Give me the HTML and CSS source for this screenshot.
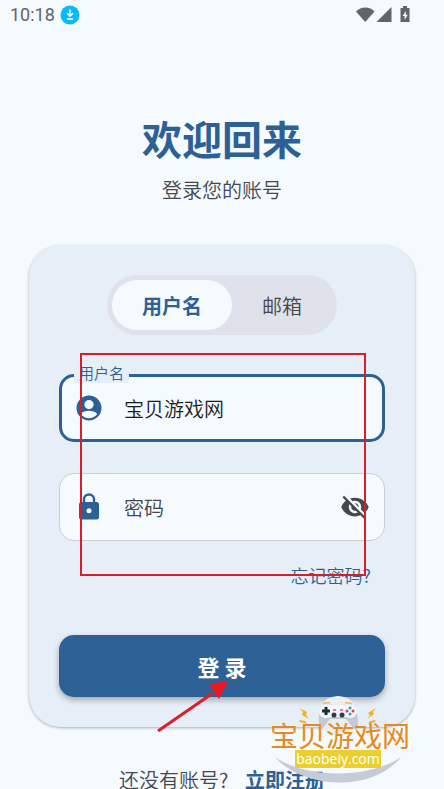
FILE: index.html
```html
<!DOCTYPE html>
<html lang="zh-CN">
<head>
    <meta charset="UTF-8">
    <meta name="viewport" content="width=device-width, initial-scale=1.0">
    <title>登录</title>
    <link rel="stylesheet" href="styles.css">
</head>
<body>
    <!-- 状态栏 -->
    <div class="status-bar">
        <span class="clock">10:18</span>
        <svg class="download-icon" width="20" height="20" viewBox="0 0 20 20">
            <circle cx="10" cy="10" r="9.5" fill="#08b9fb"/>
            <path d="M10 4.5v6.5M7 8.3l3 3 3-3M7 14h6" fill="none" stroke="#fff" stroke-width="1.5"/>
        </svg>
        <svg class="system-icons" width="56" height="18" viewBox="0 0 56 18">
            <path d="M0 5.5C5 0 14 0 18.500 5.500L9.200 16z"/>
            <path d="M20.500 16L35.500 1v15z"/>
            <path d="M44.500 2H47V0h4v2h2.500v14h-9z"/>
            <path d="M49.800 5l-3.200 5h2v4l3.200-5.200h-2z" fill="#f5faff"/>
        </svg>
    </div>

    <main class="login-page">
        <h1>欢迎回来</h1>
        <p class="subtitle">登录您的账号</p>

        <form class="login-card">
            <div class="tabs">
                <button type="button" class="tab active">用户名</button>
                <button type="button" class="tab">邮箱</button>
            </div>

            <div class="field focused">
                <label for="username">用户名</label>
                <svg class="field-icon" width="30" height="30" viewBox="0 0 24 24">
                    <path d="M12 2a10 10 0 1 0 0 20 10 10 0 0 0 0-20zm0 3.500a3.700 3.700 0 1 1 0 7.400 3.700 3.700 0 0 1 0-7.400zm0 14.700c-2.700 0-5.200-1.300-6.600-3.400 1.200-1.700 4.300-2.600 6.600-2.600s5.400.900 6.600 2.600c-1.400 2.100-3.900 3.400-6.600 3.400z"/>
                </svg>
                <input type="text" id="username" value="宝贝游戏网">
            </div>

            <div class="field">
                <svg class="field-icon" width="30" height="30" viewBox="0 0 24 24">
                    <path d="M18 8h-1V6A5 5 0 0 0 7 6v2H6a2 2 0 0 0-2 2v10a2 2 0 0 0 2 2h12a2 2 0 0 0 2-2V10a2 2 0 0 0-2-2zm-6 9a2 2 0 1 1 0-4 2 2 0 0 1 0 4zm3.100-9H8.900V6a3.100 3.100 0 0 1 6.200 0z"/>
                </svg>
                <input type="password" id="password" placeholder="密码" aria-label="密码">
                <button type="button" class="toggle-password" aria-label="显示密码">
                    <svg width="30" height="30" viewBox="0 0 24 24">
                        <path d="M12 7c2.760 0 5 2.240 5 5 0 .650-.130 1.260-.360 1.830l2.920 2.920c1.510-1.260 2.700-2.890 3.430-4.750-1.730-4.390-6-7.500-11-7.500-1.400 0-2.740.250-3.980.700l2.160 2.160C10.740 7.130 11.350 7 12 7zM2 4.270l2.280 2.280.460.460C3.080 8.300 1.780 10.020 1 12c1.730 4.390 6 7.500 11 7.500 1.550 0 3.030-.300 4.380-.840l.420.420L19.730 22 21 20.730 3.270 3 2 4.270zM7.530 9.800l1.550 1.550c-.050.210-.080.430-.080.650 0 1.660 1.340 3 3 3 .220 0 .440-.030.650-.080l1.550 1.550c-.670.330-1.410.530-2.200.530-2.760 0-5-2.240-5-5 0-.790.200-1.530.530-2.200zm4.310-.780l3.150 3.150.020-.160c0-1.660-1.340-3-3-3l-.170.010z"/>
                    </svg>
                </button>
            </div>

            <a class="forgot" href="#">忘记密码?</a>
            <button type="submit" class="submit">登 录</button>
        </form>

        <p class="register">还没有账号? <a href="#">立即注册</a></p>
    </main>

    <!-- 操作标注 -->
    <div class="highlight"></div>
    <svg class="arrow" width="72" height="52" viewBox="0 0 72 52">
        <path d="M1 50L56 12" stroke="#da1e2c" stroke-width="3"/>
        <path d="M71 0L52 3l10 15z" fill="#ee1620"/>
    </svg>

    <!-- 站点水印 -->
    <div class="watermark">
        <svg class="watermark-art" width="140" height="90" viewBox="0 0 140 90">
            <circle cx="68" cy="20" r="20" fill="#eceef0"/>
            <path d="M5 61C37 83 99 83 131 61C104 96 34 94 5 61z" fill="#c9cad8"/>
            <path d="M51 11Q61 7 68 10Q76 7 85 11Q88 15 88 29Q88 37 83 32L76 23H60L53 32Q48 37 49 29Q48 15 51 11z" fill="#c6c8d8"/>
            <path d="M49 17Q49 9 57 9H80Q87 9 87 17Q84 24 76 21H61Q51 24 49 17z" fill="#f5f5fa"/>
            <path d="M56 11v8M52 15h8" stroke="#17303c" stroke-width="3"/>
            <circle cx="64" cy="19" r="2.500" fill="#24414d"/>
            <circle cx="72" cy="19" r="2.500" fill="#24414d"/>
            <path d="M63 14h3M70 14h3" stroke="#e9536b" stroke-width="1.500"/>
            <g fill="#de4052">
                <circle cx="77" cy="15" r="1.500"/>
                <circle cx="83" cy="15" r="1.500"/>
            </g>
            <g fill="#27a1bd">
                <circle cx="80" cy="12" r="1.500"/>
                <circle cx="80" cy="18" r="1.500"/>
            </g>
            <path d="M53 8q3-2 7-1M75 7q4-1 7 1" fill="none" stroke="#e5bd58" stroke-width="1.500"/>
            <path d="M29 12l8 4-1 3 3 4-7-4 1-3zM106 12l-8 5 2 2-3 4 7-5-1-2zM29 24l6 1 2 3-7-2zM106 24l-6 1-2 3 7-2z" fill="#efb321"/>
        </svg>
        <div class="watermark-name">宝贝游戏网</div>
        <div class="watermark-url">baobeiy.com</div>
    </div>
</body>
</html>
```
FILE: styles.css
```css
* {
    box-sizing: border-box;
}

body {
    margin: 0;
    position: relative;
    height: 100vh;
    overflow: hidden;
    background-color: #f5faff;
    color: #43474e;
    font-family: "Noto Sans CJK SC", sans-serif;
    font-size: 20px;
    font-weight: 350;
    line-height: 30px;
}

button, input {
    font-family: inherit;
    font-size: 20px;
    font-weight: inherit;
    border: none;
    padding: 0;
    background: none;
}

a {
    color: #2d6195;
    text-decoration: none;
}

/* 状态栏 */
.status-bar {
    display: flex;
    align-items: center;
    height: 30px;
    padding: 0 32px 0 10px;
}

.clock {
    font-family: Roboto, sans-serif;
    font-size: 18px;
    font-weight: 400;
    color: #626466;
}

.download-icon {
    margin-left: 5px;
}

.system-icons {
    margin-left: auto;
    fill: #626466;
}

.login-page {
    padding: 78px 29px 0;
    text-align: center;
}

h1 {
    margin: 0;
    font-size: 40px;
    line-height: 60px;
    color: #2d6195;
}

.subtitle {
    margin: 7px 0 40px;
}

/* 登录卡片 */
.login-card {
    display: flex;
    flex-direction: column;
    padding: 30px;
    border-radius: 32px;
    background-color: #e6eef7;
    box-shadow: 0 1px 3px rgba(0, 0, 0, 0.3);
}

.tabs {
    display: flex;
    align-self: center;
    padding: 5px;
    border-radius: 30px;
    background-color: #dfe1eb;
}

.tab {
    height: 50px;
    padding: 0 30px;
    border-radius: 25px;
    color: #43474e;
}

.tab.active {
    background-color: #f5faff;
    color: #2d6195;
    font-weight: bold;
}

.field {
    position: relative;
    display: flex;
    align-items: center;
    height: 68px;
    margin-top: 31px;
    padding: 0 14px;
    border: 1px solid #c8cfd6;
    border-radius: 15px;
    background-color: #f5faff;
}

.field.focused {
    margin-top: 39px;
    padding: 0 12px;
    border: 3px solid #2d6195;
}

.field label {
    position: absolute;
    top: -14px;
    left: 12px;
    padding: 0 5px;
    font-size: 15px;
    line-height: 20px;
    color: #2d6195;
    background-color: #e6eef7;
}

.field-icon {
    flex: none;
    fill: #2d6195;
}

.field input {
    flex: 1;
    min-width: 0;
    height: 40px;
    margin-left: 20px;
    color: #1a1c1e;
    outline: none;
}

.field input::placeholder {
    color: #43474e;
    opacity: 1;
}

.toggle-password {
    height: 30px;
    fill: #43474e;
}

.forgot {
    align-self: flex-end;
    margin: 19px 14px 0 0;
    font-size: 18px;
}

.submit {
    height: 62px;
    margin-top: 45px;
    border-radius: 15px;
    background-color: #2d6195;
    color: white;
    font-size: 22px;
    font-weight: bold;
    box-shadow: 0 3px 6px rgba(0, 0, 0, 0.3);
}

.register {
    margin: 38px 0 0;
}

.register a {
    margin-left: 12px;
    font-weight: bold;
}

/* 操作标注 */
.highlight {
    position: absolute;
    top: 353px;
    left: 80px;
    right: 78px;
    height: 223px;
    border: 2px solid #d51f2b;
}

.arrow {
    position: absolute;
    top: 681px;
    left: 157px;
}

/* 站点水印 */
.watermark {
    position: absolute;
    top: 696px;
    right: 34px;
    width: 140px;
    height: 90px;
}

.watermark-art {
    position: absolute;
    top: 0;
    left: 0;
}

.watermark-name {
    position: relative;
    padding-top: 24px;
    font-size: 28px;
    font-weight: 400;
    color: #e58a20;
    text-align: center;
}

.watermark-url {
    position: relative;
    width: 86px;
    margin-left: 25px;
    background-color: #e9d02f;
    color: white;
    font-family: "Open Sans", sans-serif;
    font-size: 14px;
    font-weight: 400;
    line-height: 18px;
    text-align: center;
}
```
